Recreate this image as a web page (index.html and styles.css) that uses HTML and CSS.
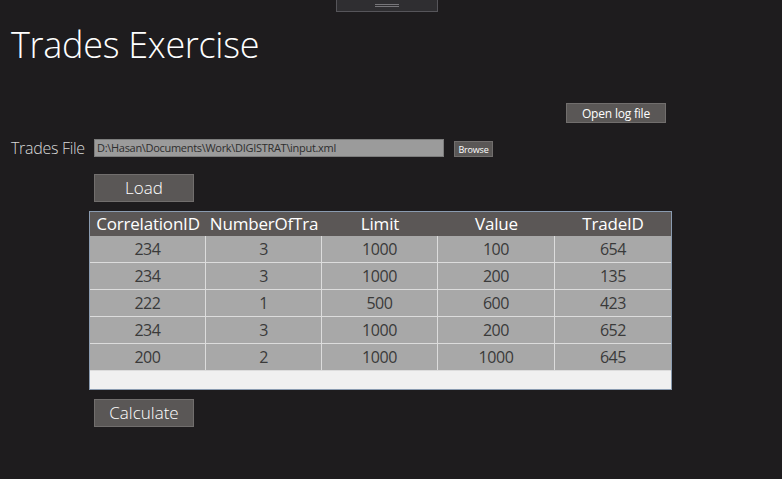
FILE: index.html
```html
<!DOCTYPE html>
<html>
<head>
<meta charset="utf-8">
<link rel="stylesheet" href="styles.css">
</head>
<body>
<div class="grip"><span class="grip-line"></span><span class="grip-line"></span></div>
<div class="page">
  <h1 class="title">Trades Exercise</h1>
  <div class="log-row"><button class="btn btn-log">Open log file</button></div>
  <div class="file-row">
    <span class="file-label">Trades File</span>
    <div class="file-input">D:\Hasan\Documents\Work\DIGISTRAT\input.xml</div>
    <button class="btn btn-browse">Browse</button>
  </div>
  <button class="btn btn-big btn-load">Load</button>
  <div class="grid">
    <div class="hcell">CorrelationID</div><div class="hcell">NumberOfTra</div><div class="hcell">Limit</div><div class="hcell">Value</div><div class="hcell">TradeID</div>
    <div class="cell">234</div><div class="cell">3</div><div class="cell">1000</div><div class="cell">100</div><div class="cell last">654</div>
    <div class="cell">234</div><div class="cell">3</div><div class="cell">1000</div><div class="cell">200</div><div class="cell last">135</div>
    <div class="cell">222</div><div class="cell">1</div><div class="cell">500</div><div class="cell">600</div><div class="cell last">423</div>
    <div class="cell">234</div><div class="cell">3</div><div class="cell">1000</div><div class="cell">200</div><div class="cell last">652</div>
    <div class="cell">200</div><div class="cell">2</div><div class="cell">1000</div><div class="cell">1000</div><div class="cell last">645</div>
    <div class="filler"></div>
  </div>
  <button class="btn btn-big btn-calc">Calculate</button>
</div>
</body>
</html>
```

FILE: styles.css
```css
html, body {
  margin: 0;
  padding: 0;
  background: #1e1c1e;
  height: 100%;
}
body {
  font-family: "Open Sans", "Noto Sans", sans-serif;
  color: #fff;
  overflow: hidden;
}
.grip {
  width: 102px;
  height: 12px;
  margin-left: 336px;
  background: #2f2e31;
  border: 1px solid #56555a;
  border-top: none;
  display: flex;
  flex-direction: column;
  align-items: center;
  justify-content: flex-start;
  padding-top: 4px;
  box-sizing: border-box;
  gap: 1px;
}
.grip-line {
  display: block;
  width: 24px;
  height: 1px;
  background: #77767a;
}
.page {
  padding-left: 11px;
  display: flex;
  flex-direction: column;
  align-items: flex-start;
}
.title {
  margin: 13px 0 0 0;
  font-weight: 300;
  font-size: 36px;
  line-height: 40px;
  letter-spacing: -0.3px;
  color: #fff;
}
.log-row {
  align-self: stretch;
  display: flex;
  justify-content: flex-end;
  padding-right: 116px;
  margin-top: 38px;
}
.btn {
  font-family: "Open Sans", "Noto Sans", sans-serif;
  background: #5a5756;
  border: 1px solid #716e6d;
  color: #fff;
  padding: 0;
  box-sizing: border-box;
  cursor: pointer;
}
.btn-log {
  width: 100px;
  height: 20px;
  font-size: 12px;
  line-height: 17px;
  letter-spacing: -0.2px;
}
.file-row {
  display: flex;
  align-items: center;
  margin-top: 14px;
  height: 22px;
}
.file-label {
  font-size: 16px;
  font-weight: 300;
  color: #d8d8d8;
  width: 83px;
  letter-spacing: -0.3px;
  white-space: nowrap;
}
.file-input {
  width: 350px;
  height: 18px;
  box-sizing: border-box;
  background: #9b9b9b;
  border: 1px solid #7c7c7c;
  color: #2e2e2e;
  font-size: 11px;
  line-height: 16px;
  padding-left: 2px;
  letter-spacing: -0.3px;
  white-space: nowrap;
  overflow: hidden;
}
.btn-browse {
  margin-left: 10px;
  width: 39px;
  height: 16px;
  font-size: 9px;
  line-height: 13px;
  letter-spacing: -0.2px;
  margin-top: 2px;
}
.btn-big {
  width: 100px;
  height: 28px;
  font-size: 17px;
  font-weight: 300;
  line-height: 24px;
  margin-left: 83px;
}
.btn-load {
  margin-top: 15px;
}
.grid {
  margin-top: 9px;
  margin-left: 78px;
  display: grid;
  grid-template-columns: 116px 116px 116px 117px 116px;
  border: 1px solid #8a9bb0;
  background: #f0f0f0;
}
.hcell {
  height: 24px;
  background: #5b5756;
  color: #fff;
  font-size: 17px;
  line-height: 23px;
  text-align: center;
  white-space: nowrap;
  overflow: hidden;
  letter-spacing: -0.2px;
}
.cell {
  height: 27px;
  box-sizing: border-box;
  background: #a8a8a8;
  border-right: 1px solid #dcdcdc;
  border-bottom: 1px solid #dcdcdc;
  color: #3a3a3a;
  font-size: 16px;
  font-weight: 400;
  line-height: 26px;
  text-align: center;
  letter-spacing: -0.4px;
}
.cell.last {
  border-right: none;
}
.filler {
  grid-column: 1 / -1;
  height: 18px;
  background: #f0f0f0;
}
.btn-calc {
  margin-top: 9px;
}
```
